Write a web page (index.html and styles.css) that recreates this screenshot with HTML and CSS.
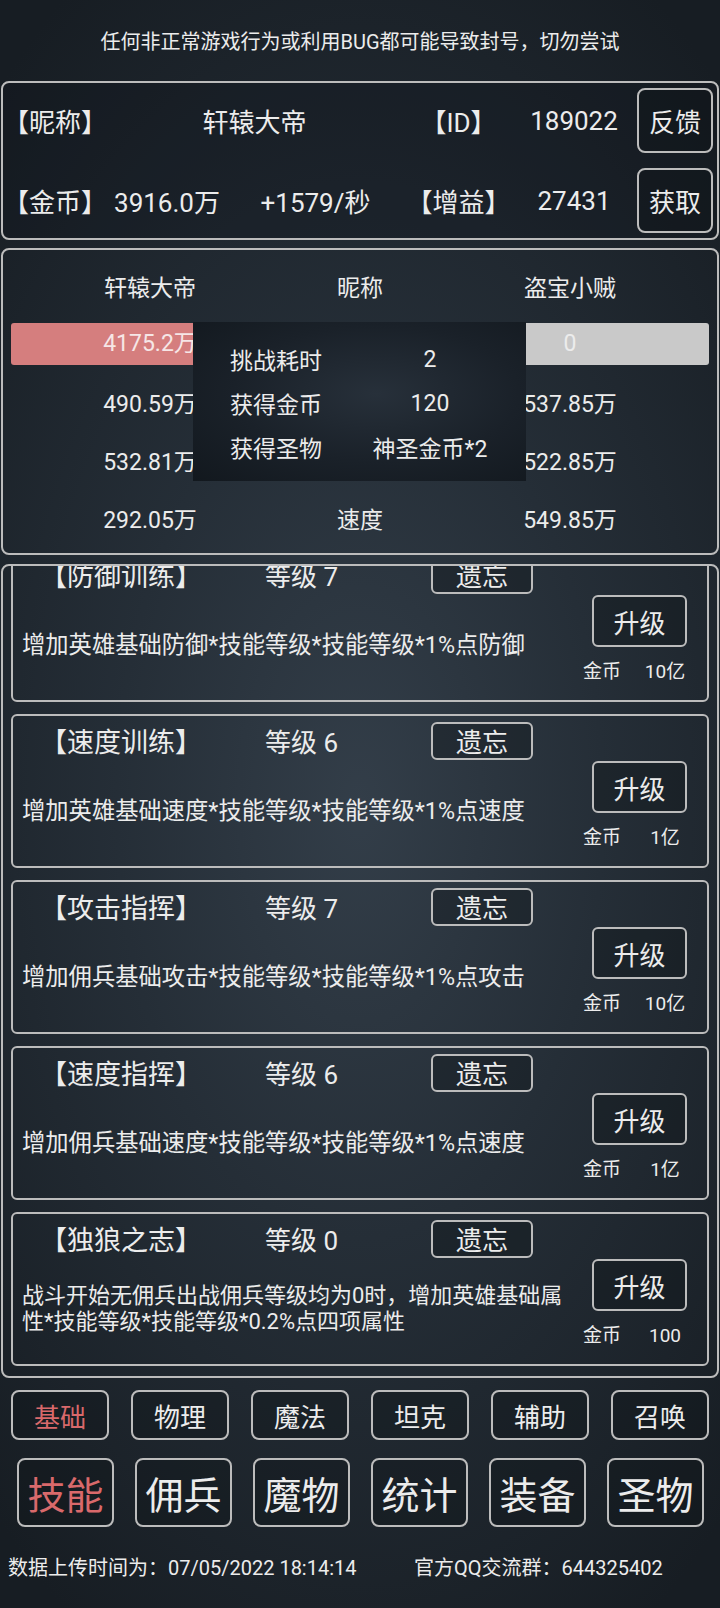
FILE: index.html
```html
<!DOCTYPE html>
<html lang="zh-CN">

<head>
    <meta charset="UTF-8">
    <meta name="viewport" content="width=device-width, initial-scale=1.0">
    <title>技能</title>
    <link rel="stylesheet" href="styles.css">
</head>

<body>
    <div class="notice">任何非正常游戏行为或利用BUG都可能导致封号，切勿尝试</div>

    <div class="panel player">
        <span>【昵称】</span>
        <span class="wide">轩辕大帝</span>
        <span>【ID】</span>
        <span>189022</span>
        <div class="btn side-btn">反馈</div>

        <span>【金币】</span>
        <span>3916.0万</span>
        <span>+1579/秒</span>
        <span>【增益】</span>
        <span>27431</span>
        <div class="btn side-btn">获取</div>
    </div>

    <div class="panel battle">
        <span>轩辕大帝</span>
        <span>昵称</span>
        <span>盗宝小贼</span>

        <div class="bar red">4175.2万</div>
        <span></span>
        <div class="bar grey">0</div>

        <span>490.59万</span>
        <span></span>
        <span>537.85万</span>

        <span>532.81万</span>
        <span></span>
        <span>522.85万</span>

        <span>292.05万</span>
        <span>速度</span>
        <span>549.85万</span>

        <div class="result">
            <span>挑战耗时</span>
            <span>2</span>
            <span>获得金币</span>
            <span>120</span>
            <span>获得圣物</span>
            <span>神圣金币*2</span>
        </div>
    </div>

    <div class="panel skills">
        <div class="skill-list">
            <div class="card">
                <div class="card-head">
                    <span class="skill-name">【防御训练】</span>
                    <span class="skill-level">等级 7</span>
                    <div class="btn forget">遗忘</div>
                </div>
                <div class="card-body">
                    <div class="desc">增加英雄基础防御*技能等级*技能等级*1%点防御</div>
                    <div class="buy">
                        <div class="btn upgrade">升级</div>
                        <div class="cost"><span>金币</span><span class="price">10亿</span></div>
                    </div>
                </div>
            </div>

            <div class="card">
                <div class="card-head">
                    <span class="skill-name">【速度训练】</span>
                    <span class="skill-level">等级 6</span>
                    <div class="btn forget">遗忘</div>
                </div>
                <div class="card-body">
                    <div class="desc">增加英雄基础速度*技能等级*技能等级*1%点速度</div>
                    <div class="buy">
                        <div class="btn upgrade">升级</div>
                        <div class="cost"><span>金币</span><span class="price">1亿</span></div>
                    </div>
                </div>
            </div>

            <div class="card">
                <div class="card-head">
                    <span class="skill-name">【攻击指挥】</span>
                    <span class="skill-level">等级 7</span>
                    <div class="btn forget">遗忘</div>
                </div>
                <div class="card-body">
                    <div class="desc">增加佣兵基础攻击*技能等级*技能等级*1%点攻击</div>
                    <div class="buy">
                        <div class="btn upgrade">升级</div>
                        <div class="cost"><span>金币</span><span class="price">10亿</span></div>
                    </div>
                </div>
            </div>

            <div class="card">
                <div class="card-head">
                    <span class="skill-name">【速度指挥】</span>
                    <span class="skill-level">等级 6</span>
                    <div class="btn forget">遗忘</div>
                </div>
                <div class="card-body">
                    <div class="desc">增加佣兵基础速度*技能等级*技能等级*1%点速度</div>
                    <div class="buy">
                        <div class="btn upgrade">升级</div>
                        <div class="cost"><span>金币</span><span class="price">1亿</span></div>
                    </div>
                </div>
            </div>

            <div class="card">
                <div class="card-head">
                    <span class="skill-name">【独狼之志】</span>
                    <span class="skill-level">等级 0</span>
                    <div class="btn forget">遗忘</div>
                </div>
                <div class="card-body">
                    <div class="desc long">战斗开始无佣兵出战佣兵等级均为0时，增加英雄基础属性*技能等级*技能等级*0.2%点四项属性</div>
                    <div class="buy">
                        <div class="btn upgrade">升级</div>
                        <div class="cost"><span>金币</span><span class="price">100</span></div>
                    </div>
                </div>
            </div>
        </div>
    </div>

    <div class="tabs">
        <div class="btn tab active">基础</div>
        <div class="btn tab">物理</div>
        <div class="btn tab">魔法</div>
        <div class="btn tab">坦克</div>
        <div class="btn tab">辅助</div>
        <div class="btn tab">召唤</div>
    </div>

    <div class="menu">
        <div class="btn big active">技能</div>
        <div class="btn big">佣兵</div>
        <div class="btn big">魔物</div>
        <div class="btn big">统计</div>
        <div class="btn big">装备</div>
        <div class="btn big">圣物</div>
    </div>

    <div class="footer">
        <span class="upload">数据上传时间为：07/05/2022 18:14:14</span>
        <span>官方QQ交流群：644325402</span>
    </div>
</body>

</html>
```

FILE: styles.css
```css
html {
    background: #161c22;
}

body {
    margin: 0;
    padding: 0;
    width: 720px;
    height: 1608px;
    overflow: hidden;
    color: #ececec;
    font-family: Roboto, "Noto Sans CJK SC", sans-serif;
    background: radial-gradient(ellipse 75% 60% at 50% 50%, #333e49 0%, #252e37 45%, #171d23 100%);
}

.btn {
    box-sizing: border-box;
    display: flex;
    align-items: center;
    justify-content: center;
    border: 2px solid #bcbcbc;
    border-radius: 8px;
    background: rgba(14, 19, 24, 0.35);
}

.notice {
    height: 81px;
    display: flex;
    align-items: center;
    justify-content: center;
    font-size: 20px;
}

.panel {
    box-sizing: border-box;
    margin: 0 1px;
    border: 2px solid #bcbcbc;
    border-radius: 8px;
}

/* player info */
.player {
    height: 159px;
    display: grid;
    grid-template-columns: 103px 122px 175px 111px 120px 79px;
    grid-template-rows: 65px 65px;
    row-gap: 15px;
    padding: 5px 4px 5px 0;
    align-items: center;
    text-align: center;
    font-size: 26px;
    background: rgba(12, 17, 22, 0.25);
}

.player .wide {
    grid-column: span 2;
}

.side-btn {
    width: 76px;
    height: 65px;
    justify-self: end;
}

/* battle compare */
.battle {
    position: relative;
    height: 307px;
    margin-top: 8px;
    padding: 7px 8px 6px;
    display: grid;
    grid-template-columns: 278px 142px 278px;
    grid-template-rows: repeat(5, 58px);
    align-items: center;
    text-align: center;
    font-size: 23px;
}

.bar {
    height: 42px;
    line-height: 42px;
    border-radius: 3px;
}

.bar.red {
    background: #d57e7e;
    color: #f6e6e6;
}

.bar.grey {
    background: #c9c9c9;
    color: #ececec;
}

.result {
    position: absolute;
    left: 190px;
    top: 72px;
    width: 333px;
    height: 159px;
    box-sizing: border-box;
    padding: 15px 0 12px;
    display: grid;
    grid-template-columns: 166px 142px;
    grid-auto-rows: 44px;
    align-items: center;
    background: radial-gradient(ellipse at 55% 45%, #27303a 0%, #1a2129 55%, #12181e 100%);
}

/* skill list */
.skills {
    height: 814px;
    margin-top: 9px;
    padding: 0 8px;
    overflow: hidden;
}

.skill-list {
    margin-top: -18px;
    display: flex;
    flex-direction: column;
    gap: 12px;
}

.card {
    box-sizing: border-box;
    height: 154px;
    border: 2px solid #bcbcbc;
    border-radius: 6px;
    display: flex;
    flex-direction: column;
}

.card-head {
    height: 43px;
    padding-top: 5px;
    box-sizing: border-box;
    display: grid;
    grid-template-columns: 216px 202px 102px;
    align-items: center;
    font-size: 26px;
}

.skill-name {
    text-align: center;
    font-size: 27px;
}

.skill-level {
    padding-left: 36px;
}

.forget {
    height: 38px;
    border-radius: 6px;
}

.card-body {
    flex: 1;
    display: flex;
}

.desc {
    flex: 1;
    display: flex;
    align-items: center;
    padding: 0 0 4px 9px;
    font-size: 23.3px;
    line-height: 26px;
}

.desc.long {
    font-size: 22px;
}

.buy {
    width: 133px;
    padding-top: 2px;
}

.upgrade {
    width: 95px;
    height: 52px;
    margin-left: 18px;
    font-size: 26px;
    border-radius: 6px;
}

.cost {
    display: flex;
    margin-top: 12px;
    padding-left: 9px;
    font-size: 19px;
    line-height: 26px;
}

.price {
    width: 60px;
    margin-left: 14px;
    text-align: center;
}

/* bottom navigation */
.tabs {
    display: flex;
    gap: 22px;
    margin-top: 12px;
    padding-left: 11px;
}

.tab {
    width: 98px;
    height: 50px;
    font-size: 26px;
}

.menu {
    display: flex;
    gap: 21px;
    margin-top: 18px;
    padding-left: 17px;
}

.big {
    width: 97px;
    height: 69px;
    font-size: 38px;
}

.active {
    color: #d9696b;
}

.footer {
    display: flex;
    margin-top: 29px;
    padding-left: 8px;
    font-size: 20px;
    line-height: 24px;
}

.footer .upload {
    width: 406px;
}
```
